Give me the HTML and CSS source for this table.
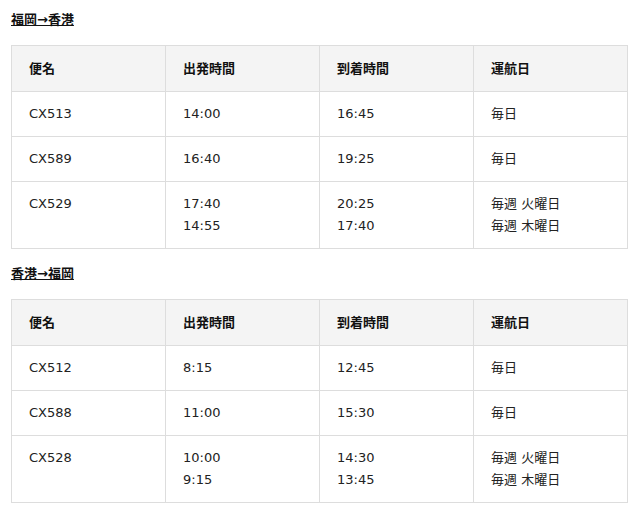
FILE: index.html
```html
<!DOCTYPE html>
<html lang="ja">
<head>
<meta charset="utf-8">
<title>時刻表</title>
<link rel="stylesheet" href="styles.css">
</head>
<body>
<div class="page">
  <h3 class="route"><span>福岡→香港</span></h3>
  <table class="timetable">
    <thead>
      <tr><th>便名</th><th>出発時間</th><th>到着時間</th><th>運航日</th></tr>
    </thead>
    <tbody>
      <tr><td>CX513</td><td>14:00</td><td>16:45</td><td>毎日</td></tr>
      <tr><td>CX589</td><td>16:40</td><td>19:25</td><td>毎日</td></tr>
      <tr><td>CX529</td><td>17:40<br>14:55</td><td>20:25<br>17:40</td><td>毎週 火曜日<br>毎週 木曜日</td></tr>
    </tbody>
  </table>
  <h3 class="route"><span>香港→福岡</span></h3>
  <table class="timetable">
    <thead>
      <tr><th>便名</th><th>出発時間</th><th>到着時間</th><th>運航日</th></tr>
    </thead>
    <tbody>
      <tr><td>CX512</td><td>8:15</td><td>12:45</td><td>毎日</td></tr>
      <tr><td>CX588</td><td>11:00</td><td>15:30</td><td>毎日</td></tr>
      <tr><td>CX528</td><td>10:00<br>9:15</td><td>14:30<br>13:45</td><td>毎週 火曜日<br>毎週 木曜日</td></tr>
    </tbody>
  </table>
</div>
</body>
</html>
```
FILE: styles.css
```css
html, body {
  margin: 0;
  padding: 0;
  background: #fff;
}
body {
  font-family: "DejaVu Sans", "Noto Sans CJK JP", sans-serif;
  font-size: 13px;
  color: #222;
}
.page {
  padding: 9px 12px 0 11px;
}
.route {
  margin: 0 0 15px;
  font-size: 13px;
  line-height: 21px;
  font-weight: bold;
  color: #111;
}
.route span {
  text-decoration: underline;
}
.timetable {
  width: 617px;
  border-collapse: collapse;
  table-layout: fixed;
  margin: 0 0 14px;
}
.timetable th,
.timetable td {
  width: 25%;
  border: 1px solid #dddddd;
  padding: 11px 17px 11px;
  line-height: 22px;
  text-align: left;
  vertical-align: top;
}
.timetable th {
  background: #f4f4f4;
  font-weight: bold;
  color: #111;
  padding-top: 12px;
  padding-bottom: 11px;
}
```
